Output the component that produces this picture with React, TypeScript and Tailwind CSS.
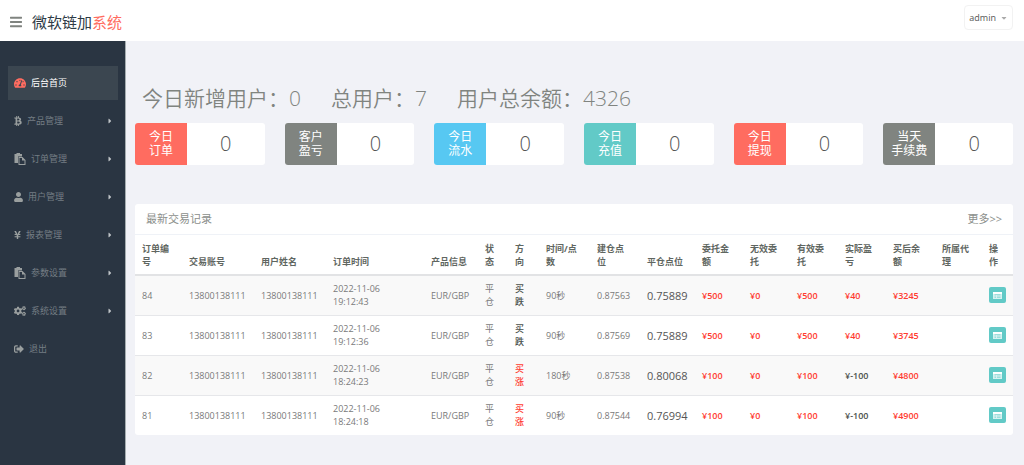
import { FaBars, FaBtc, FaCaretDown, FaCaretRight, FaCogs, FaSignOutAlt, FaTachometerAlt, FaUser, FaYenSign } from "react-icons/fa";

const PasteIcon = ({ className }: { className?: string }) => (
    <svg viewBox="0 0 24 24" className={className} fill="currentColor" aria-hidden="true">
        <path d="M1 2h4V0h7v2h4v5H8v13H1z" />
        <path fillRule="evenodd" d="M9 8h8l6 6v10H9zM11 10v12h10v-7h-5v-5z" />
    </svg>
);

const CardIcon = () => (
    <svg viewBox="0 0 18 14" className="w-[9px] h-[7px]" aria-hidden="true">
        <rect x="0" y="0" width="18" height="14" rx="1" fill="white" fillOpacity="0.75" />
        <path d="M0 2h18" stroke="white" strokeWidth="4" />
        <path d="M3 5h12M3 8h3M8 8h7M3 11h3M8 11h7" stroke="#62cac7" strokeWidth="1" />
    </svg>
);

const menu = [
    { title: "后台首页", icon: FaTachometerAlt, size: "w-3 h-3", active: true, children: false },
    { title: "产品管理", icon: FaBtc, size: "w-2 h-2.5", active: false, children: true },
    { title: "订单管理", icon: PasteIcon, size: "w-3 h-3", active: false, children: true },
    { title: "用户管理", icon: FaUser, size: "w-[9px] h-2.5", active: false, children: true },
    { title: "报表管理", icon: FaYenSign, size: "w-[7px] h-2.5", active: false, children: true },
    { title: "参数设置", icon: PasteIcon, size: "w-3 h-3", active: false, children: true },
    { title: "系统设置", icon: FaCogs, size: "w-3 h-3", active: false, children: true },
    { title: "退出", icon: FaSignOutAlt, size: "w-2.5 h-2.5", active: false, children: false },
];

const totals = [
    { label: "今日新增用户：", value: "0" },
    { label: "总用户：", value: "7" },
    { label: "用户总余额：", value: "4326" },
];

const cards = [
    { lines: ["今日", "订单"], value: 0, color: "bg-[#ff6c60]" },
    { lines: ["客户", "盈亏"], value: 0, color: "bg-[#808480]" },
    { lines: ["今日", "流水"], value: 0, color: "bg-[#57c8f2]" },
    { lines: ["今日", "充值"], value: 0, color: "bg-[#62cac7]" },
    { lines: ["今日", "提现"], value: 0, color: "bg-[#ff6c60]" },
    { lines: ["当天", "手续费"], value: 0, color: "bg-[#808480]" },
];

const columns = [
    { title: "订单编号", width: "w-[47px]" },
    { title: "交易账号", width: "w-[72px]" },
    { title: "用户姓名", width: "w-[72px]" },
    { title: "订单时间", width: "w-[98px]" },
    { title: "产品信息", width: "w-[54px]" },
    { title: "状态", width: "w-[30px]" },
    { title: "方向", width: "w-[31px]" },
    { title: "时间/点数", width: "w-[51px]" },
    { title: "建仓点位", width: "w-[50px]" },
    { title: "平仓点位", width: "w-[55px]" },
    { title: "委托金额", width: "w-[48px]" },
    { title: "无效委托", width: "w-[47px]" },
    { title: "有效委托", width: "w-[48px]" },
    { title: "实际盈亏", width: "w-[48px]" },
    { title: "买后余额", width: "w-[49px]" },
    { title: "所属代理", width: "w-[47px]" },
    { title: "操作", width: "w-[31px]" },
];

const orders = [
    { id: 84, date: "2022-11-06", time: "19:12:43", up: false, period: "90秒", open: "0.87563", close: "0.75889", amount: 500, profit: 40, balance: 3245 },
    { id: 83, date: "2022-11-06", time: "19:12:36", up: false, period: "90秒", open: "0.87569", close: "0.75889", amount: 500, profit: 40, balance: 3745 },
    { id: 82, date: "2022-11-06", time: "18:24:23", up: true, period: "180秒", open: "0.87538", close: "0.80068", amount: 100, profit: -100, balance: 4800 },
    { id: 81, date: "2022-11-06", time: "18:24:18", up: true, period: "90秒", open: "0.87544", close: "0.76994", amount: 100, profit: -100, balance: 4900 },
];

const App = () => {
    return (
        <div className="min-h-screen flex flex-col bg-[#f1f2f7] text-[#797979] font-['Open_Sans','Noto_Sans_CJK_SC',sans-serif]">
            <header className="flex h-[41px] items-center justify-between bg-white pl-[10px] pr-[11px]">
                <div className="flex items-center gap-[10px] pt-0.5">
                    <button type="button" aria-label="菜单" className="text-[#808480]">
                        <FaBars className="w-3 h-3.5" />
                    </button>
                    <a href="#" className="text-[15px] leading-5 text-[#2e3b46]">
                        微软链加<span className="text-[#ff6c60]">系统</span>
                    </a>
                </div>
                <button
                    type="button"
                    className="flex items-center gap-1 h-[25px] px-1 mb-1.5 rounded-sm border border-[#f2f2f2] text-[9px] font-medium text-[#555]"
                >
                    admin
                    <FaCaretDown className="w-2 h-2 text-[#aaa]" />
                </button>
            </header>

            <div className="flex flex-1">
                <nav className="w-[126px] shrink-0 border-r border-[#a5adb0] bg-[#2a3542] pt-[25px] pl-2 pr-[7px]">
                    <ul className="flex flex-col gap-1">
                        {menu.map((item) => (
                            <li key={item.title}>
                                <a
                                    href="#"
                                    className={
                                        item.active
                                            ? "flex items-center gap-[5px] h-[34px] pl-1.5 pr-1 bg-[#3b4650] text-[9px] text-white"
                                            : "flex items-center gap-[5px] h-[34px] pl-1.5 pr-1 text-[9px] text-[#747d84]"
                                    }
                                >
                                    <item.icon className={`${item.size} ${item.active ? "text-[#ff6c60]" : "text-[#9a9f9f]"}`} />
                                    <span>{item.title}</span>
                                    {item.children && <FaCaretRight className="w-2 h-2 ml-auto text-[#c0c5c8]" />}
                                </a>
                            </li>
                        ))}
                    </ul>
                </nav>

                <main className="flex-1 min-w-0 pt-[42px] pl-[9px] pr-[11px] pb-[29px]">
                    <div className="flex gap-[30px] px-[7px] text-[21px] leading-[30px] text-[#808480] font-[350]">
                        {totals.map((item) => (
                            <div key={item.label}>{item.label}{item.value}</div>
                        ))}
                    </div>

                    <div className="grid grid-cols-6 gap-5 mt-[10px]">
                        {cards.map((card) => (
                            <section key={card.lines.join("")} className="flex h-[42px] rounded-[3px] bg-white overflow-hidden">
                                <div className={`flex items-center justify-center w-[52px] text-center text-[12px] leading-[14px] text-white ${card.color}`}>
                                    <p>{card.lines[0]}<br />{card.lines[1]}</p>
                                </div>
                                <div className="flex flex-1 items-center justify-center text-[20px] font-light text-[#555]">
                                    {card.value}
                                </div>
                            </section>
                        ))}
                    </div>

                    <section className="mt-[39px] rounded-[3px] bg-white overflow-hidden">
                        <div className="flex h-[31px] items-center justify-between px-[11px] border-b border-[#eff2f7] text-[11px] text-[#8c8f8c]">
                            <h2>最新交易记录</h2>
                            <a href="#">更多&gt;&gt;</a>
                        </div>
                        <table className="w-full table-fixed text-left text-[9px] leading-[13px]">
                            <thead>
                                <tr className="h-10 border-b-2 border-[#e2e3e5] text-[#5f6661]">
                                    {columns.map((column) => (
                                        <th key={column.title} className={`pl-[7px] pr-[9px] py-1.5 align-bottom font-bold ${column.width}`}>
                                            {column.title}
                                        </th>
                                    ))}
                                </tr>
                            </thead>
                            <tbody className="[&_td]:pl-[7px] [&_td]:py-1.5 [&_td]:whitespace-nowrap">
                                {orders.map((order) => (
                                    <tr key={order.id} className="h-10 border-b border-[#e6e7ea] odd:bg-[#f9f9f9] last:border-0">
                                        <td>{order.id}</td>
                                        <td>13800138111</td>
                                        <td>13800138111</td>
                                        <td>{order.date}<br />{order.time}</td>
                                        <td>EUR/GBP</td>
                                        <td>平<br />仓</td>
                                        <td className={order.up ? "font-medium text-[#ff3b30]" : "font-medium text-[#4a504c]"}>
                                            买<br />{order.up ? "涨" : "跌"}
                                        </td>
                                        <td>{order.period}</td>
                                        <td>{order.open}</td>
                                        <td className="text-[11px] text-[#555]">{order.close}</td>
                                        <td className="font-semibold text-[#ff3b30]">¥{order.amount}</td>
                                        <td className="font-semibold text-[#ff3b30]">¥0</td>
                                        <td className="font-semibold text-[#ff3b30]">¥{order.amount}</td>
                                        <td className={order.profit > 0 ? "font-semibold text-[#ff3b30]" : "font-semibold text-[#4a504c]"}>
                                            ¥{order.profit}
                                        </td>
                                        <td className="font-semibold text-[#ff3b30]">¥{order.balance}</td>
                                        <td></td>
                                        <td>
                                            <button type="button" aria-label="查看" className="flex items-center justify-center w-[17px] h-4 rounded-[2px] bg-[#62cac7]">
                                                <CardIcon />
                                            </button>
                                        </td>
                                    </tr>
                                ))}
                            </tbody>
                        </table>
                    </section>
                </main>
            </div>
        </div>
    );
};

export default App;
